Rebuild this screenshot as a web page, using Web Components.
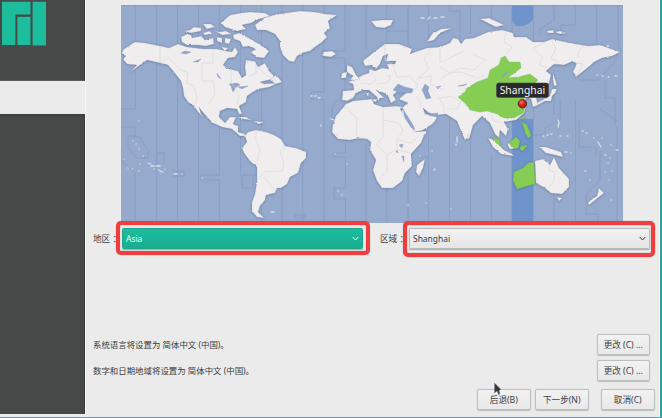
<!DOCTYPE html>
<html lang="zh-CN">
<head>
<meta charset="utf-8">
<title>Installer</title>
<style>
html,body{margin:0;width:662px;height:418px;overflow:hidden;background:#ebebeb;font-family:"Noto Sans","Noto Sans CJK SC",sans-serif;font-size:8.6px;color:#393d3e}
</style>
</head>
<body>
<installer-window></installer-window>
<script>
const define = (name, html) => customElements.define(name, class extends HTMLElement {
  constructor() {
    super();
    const t = document.createElement('template');
    t.innerHTML = html;
    this.attachShadow({mode: 'open'}).append(t.content.cloneNode(true));
  }
});

define('side-panel', `
<style>
:host{display:flex;flex-direction:column;width:85px;height:414px;background:#ebebeb}
.top{height:81px;background:#464947;border-right:1px solid #3a3d3b;border-bottom:1px solid #5b5e5c;box-sizing:border-box}
.current{height:33px;background:#ebebeb}
.rest{flex:1;background:linear-gradient(#3b3d3c,#464947 4px);border-right:1px solid #3a3d3b}
svg{display:block}
</style>
<div class="top"><svg width="50" height="48"><path fill="#1bbd9d" d="M2 1.7H30.5V14.5H15.4V45H2ZM17.4 16.8H30.5V45H17.4ZM32.6 1.7H46V45.5H32.6Z"/></svg></div>
<div class="current"></div><div class="rest"></div>`);

define('zone-map', `
<style>
:host{display:block;width:502px;height:218px}
svg{display:block}
.land{fill:#f0edee;stroke:#a3abbd;stroke-width:.3;stroke-linejoin:round}
.zone{fill:#85ce53;stroke:#78b66a;stroke-width:.35}
.water{fill:#8fa5cc;stroke:#8090b1;stroke-width:.3}
.grid{fill:none;stroke:#8299c1;stroke-width:.65}
.border{fill:none;stroke:#d9d5d6;stroke-width:.6}
.dots{fill:none;stroke:#d8dde8;stroke-width:1.3;stroke-linecap:round}
text{font:10.6px "Noto Sans",sans-serif;fill:#f4f4f4}
</style>
<svg width="502" height="218" viewBox="121 5 502 218">
<defs>
<filter id="coast" x="-5%" y="-5%" width="110%" height="110%" color-interpolation-filters="sRGB"><feTurbulence type="fractalNoise" baseFrequency=".28" numOctaves="2" seed="8" result="n"/><feDisplacementMap in="SourceGraphic" in2="n" scale="2" xChannelSelector="R" yChannelSelector="G" result="d"/><feDropShadow in="d" dx="0" dy=".4" stdDeviation=".8" flood-color="#50658f" flood-opacity=".7"/></filter>
<radialGradient id="pin" cx=".4" cy=".3"><stop stop-color="#ff7266"/><stop offset=".6" stop-color="#e52c22"/><stop offset="1" stop-color="#c91c14"/></radialGradient>
</defs>
<path fill="#96aacd" d="M121 5h502v218H121z"/>
<path fill="#6f93cb" d="M512 5h21v15l-5 4-5 2h-7l-4-6zM512 119h21v104h-21z"/>
<path class="grid" d="M121 5.5H623M135.500 5V109H121M156.500 5V223M177.500 5V223M198.500 5V223M219.500 5V175H201V180H219.500V223M240.500 5V175H262M261.500 5V223M282 5V223M302.700 5V223M324 5V92H311V99H324V223M345 5V51H323V58H345V91L332 107V116M345.500 139V153H333V157H345.500V188H334V199H345.500V223M366 5V50M366 145V223M386.700 5V50M386.700 31H408M386.700 188V223M408 5V45M408 170V223M428.500 5V38M428.500 130V157H419M428.500 157V223M449.500 5V11H460V40M449.500 115V223M470.500 5V34M470.500 137V223M491.500 5V25M491.500 155V223M512 5V223M533.500 5V223M554 5V20L540 29V34M554 70V115M554 165V223M575.500 5V25H561V36M575.500 100V223M596.500 5V42M618 5V45L622 53M619 57L598 80H580M605 80V98H615V125L617 127V223M121 127H135V136H128V147L136 158H148V151L140 137H132M157 163V153H164V164M121 160L135 173V223M172 171H184V176H172M600 109L617 121M579 119V147H596V155M600 150V180L586 195V214H598V223M491 128H511M494 135V128M242 175V188H253V175M295 215H305V218H295V215M533 135H545V128L560 119V100"/>
<g filter="url(#coast)">
<path class="land" d="M123 50L127 47 135 42 145 43 160 46 169 48 178 44 187 47 203 49 217 49 226 51 232 52 235 47 238 52 235 57 228 58 223 65 229 69 238 71 242 78 246 75 245 67 246 60 255 61.500 258 67 265 63 269 71 276 78 268 80 260 82 264 84 277 83 270 87 258 89 253 92 247 96 246 102 239 106 242 114 239 114 237 109 227 108 220 111 219 117 225 123 230 117 236 117 233 124 238 126 238 132 245 134 248 136 240 136 232 129 222 127 213 123 207 117 201 110 199 107 201 114 204 118 198 112 194 106 188 102 184 96 183 88 181 81 174 72 168 65 156 62 147 60 140 65 130 72 137 65 127 64 123 59 126 56 122 54Z"/>
<path class="land" d="M248 132L256 130 266 132 274 135 281 139 285 146 296 148 306 152 306 158 301 163 298 173 290 177 287 184 281 188 277 188 275 193 266 195 265 200 260 206 258 212 264 218 257 217 252 211 252 202 255 194 257 181 257 167 250 161 244 153 242 148 247 142 245 136Z"/>
<path class="land" d="M255 25L264 18 274 15 286 13 300 11 315 12 325 14 337 15 328 21 330 28 324 33 327 37 322 42 315 47 310 51 302 53 297 56 294 62 289 61 283 55 280 48 280 41 275 34 266 30 257 30Z"/>
<path class="land" d="M181 37L187 34 191 35 192 38 201 36 205 40 213 38 214 44 206 46 198 45 187 45 182 42ZM184 31L190 30 194 27 201 28 201 31 191 33ZM203 24H211L215 27 207 29ZM203 33L210 31 212 34 205 35ZM215 31L220 32 226 31 231 34 222 35ZM217 37L222 38 222 43 217 41ZM225 38L231 39 229 44 225 43ZM221 23L230 15 241 13 250 12 265 13 270 16 259 19 251 23 242 25 246 29 237 31 231 29 225 27ZM233 35L239 33 247 37 259 44 269 51 264 58 256 57 251 52 256 49 249 46 243 47 240 41 234 39ZM221 47L228 48 225 51ZM323 52L332 51 336 54 331 57 324 56ZM270 80L276 75 282 82 276 84ZM238 117L246 117 252 120 243 119ZM254 121L264 122 259 124ZM371 21L382 20 393 20 391 25 384 28 376 27Z"/>
<path class="land" d="M342 109L336 116 333 124 332 132 338 139 350 140 359 138 367 139 371 142 370 150 376 160 373 170 377 181 382 188 393 188 402 181 405 173 412 166 411 154 421 143 426 131 415 132 409 124 403 113 400 109 403 107 396 106 383 107 374 104 372 99 353 101 346 104Z"/>
<path class="land" d="M342 100L343 91 354 90 353 84 348 82 356 79 363 75 369 73 370 69 375 71 382 68 389 69 387 64 395 64 396 61 386 61 388 54 383 56 380 64 376 69 372 65 365 66 363 61 374 52 385 44 399 44 412 49 410 54 418 51 427 48 440 47 450 43 453 38 458 39 461 44 465 39 474 38 488 32 502 30 513 33 514 37 526 37 533 42 544 42 552 39 570 43 588 46 600 45 620 52 612 56 602 58 594 62 586 69 576 77 573 71 578 65 573 61 564 65 554 64 546 71 551 75 549 83 541 90 536 97 538 105 533 107 531 99 527 97 524 101 526 107 524 113 516 120 504 122 508 129 506 136 500 130 499 138 495 134 490 123 482 116 473 125 470 136 465 140 461 131 457 121 446 114 438 115 429 113 423 108 425 114 437 117 434 123 423 130 415 132 407 121 402 112 403 107 408 103 399 99 406 93 397 92 393 95 396 100 391 103 387 94 381 92 376 90 384 98 380 98 378 101 377 97 369 90 363 90 356 93 353 98 347 101Z"/>
<path class="land" d="M347 65L352 67 356 75 360 79 350 80 353 76 347 72ZM342 73L347 72 346 78 341 78ZM371 100L377 99 376 102ZM366 93L369 93 368 97ZM425 159L423 168 419 176 416 172 417 165ZM468 134L470 137 467 139ZM427 42L432 34 441 29 452 28 440 33 434 40ZM577 63L583 64 577 76 573 72ZM553 73L557 85 554 86 553 80ZM552 89L557 89 555 93 552 96 551 101 545 101 538 105 537 103 544 99 550 96ZM480 19L489 18 504 25 496 27 488 23ZM547 31L553 30 554 33 548 33ZM555 32L560 31 566 33 560 34Z"/>
<path class="land" d="M488 138L494 140 504 150 512 154 514 156 501 154 493 147ZM507 144L514 141 515 148 510 149ZM539 147L546 147 555 150 561 152 563 157 555 155 546 153ZM535 161L543 159 550 165 554 157 559 168 569 179 569 187 562 194 551 193 545 188 536 183ZM557 197L562 198 559 201ZM599 188L604 193 599 197 594 201 589 205 588 202 597 196Z"/>
<path class="zone" d="M458 97L465 92 467 88 477 82 488 78 490 70 499 65 501 58 505 56 509 62 520 62 521 68 508 78 518 77 530 74 538 80 533 85 520 83 526 90 530 92 524 98 526 106 523 113 514 118 504 118 497 114 487 111 480 112 470 110 467 105Z"/>
<path class="zone" d="M514 172L523 168 528 163 534 162 535 184 527 186 517 189 513 180ZM493 137L499 139 501 146 496 143ZM509 143L516 137 520 141 518 148 513 149ZM522 122L527 125 531 136 528 138 525 132ZM521 146L527 145 523 151 520 150ZM523 115L525 118 522 120Z"/>
</g>
<path class="water" d="M181 53L185 51 191 52 186 54ZM193 62L201 59 198 62ZM217 73L221 79 218 77ZM229 84L237 83 240 85 236 87 233 92 231 86ZM238 87L248 86 242 89ZM393 90L398 84 405 87 413 89 412 93 400 93ZM422 90L425 84 429 87 428 91 431 98 426 99 424 94ZM399 145L403 144 402 148ZM402 156L404 156 404 162ZM397 150L398 153 396 152ZM436 87L441 86 438 89ZM458 86L467 84 463 86ZM403 109L413 125 415 130 411 127 405 118ZM423 108L430 114 438 113 437 116 431 116ZM501 78L507 71 508 73Z"/>
<path class="border" d="M160 46V63L168 57 181 70 188 73 187 83 194 86 197 99 194 106M213 49V63H202V81H213L215 94 208 105M231 69V82L239 94 237 105M249 76L256 73V65L265 74 277 81M256 131V140L260 149 257 162M257 181L264 172 282 171 284 163 280 151 285 147M264 177L272 187 278 190M345 107L357 118 356 138M356 138L366 139M383 107V137L376 145 387 154V171L378 182M387 154L397 150V139L403 131 399 123 383 120M398 150L411 153M398 140L411 143 418 137M372 72L376 79 371 84 360 83M386 76L391 76 387 83 377 84M385 45V60L393 65 397 77M397 77L410 76 418 86 411 93M431 48L424 59 429 69 418 78 432 76 430 84 444 90M440 48V62L450 58 464 51M440 67L450 73 460 68 474 70 485 60 473 54M441 78L451 73 461 72 477 78 485 75M440 98L452 96 461 102 457 109 447 109M416 96L420 102 420 108M438 97L444 106 444 113M506 32L504 42 512 47 506 54M544 43L533 48 542 57 540 65 547 68M552 40L556 49 551 58 558 62M583 46L578 53 578 58M548 161L550 171 555 172 554 180 549 188M491 115L494 121 503 123"/>
<path class="dots" d="M139 121h.1M133 141h.1M136 144h.1M139 149h.1M143 156h.1M124 159h.1M140 164h.1M128 168h.1M132 169h.1M139 171h.1M148 163l3 1M151 166h3M156 166h4M154 169h.1M159 170l3 2M165 169h.1M163 172h.1M174 174h3M182 174h.1M202 178h.1M311 96h1M315 96h1M318 98h2M321 125v1M331 119l3 1M335 154h.1M347 164h.1M338 191h.1M342 195h.1M271 212h3M457 137v5M456 144v1M432 151h.1M434 170l1-1M420 156h.1M408 205h.1M426 203h.1M451 209h.1M421 18h3M428 19l2-2M434 18h3M441 17h3M597 75h.1M602 76h1M608 77h1M615 76h2M558 120l1 3-1 4M543 136h1M547 135h1M551 134h1M560 136h1M567 136h1M582 131h1M586 133h1M594 138h.1M602 138h.1M598 142l3 5M611 145h.1M616 150h2M605 155h1M610 158h.1M608 163h.1M612 171h.1M605 172h.1M609 180h.1M585 171h1M590 180h.1M565 152h2M571 153h.1M611 200h.1M607 46h2"/>
<path fill="#292929" stroke="#494949" stroke-width=".6" d="M498.500 83H546.500Q548.500 83 548.500 85V95.500Q548.500 97.500 546.500 97.500H498.500Q496.500 97.500 496.500 95.500V85Q496.500 83 498.500 83Z"/>
<text x="499.700" y="94" textLength="45.500" lengthAdjust="spacingAndGlyphs">Shanghai</text>
<circle cx="522.400" cy="103.800" r="4.200" fill="url(#pin)" stroke="#4a2922" stroke-width=".9"/>
</svg>`);

define('combo-box', `
<style>
:host{display:flex;align-items:center;justify-content:space-between;box-sizing:border-box;width:241px;height:21px;padding:0 3.5px 0 3px;font-size:8.45px;border:1px solid #b8bcbc;border-radius:1.5px;background:linear-gradient(#f2f2f2,#e5e5e5);box-shadow:0 .5px 1px #aaa}
:host([active]){background:linear-gradient(#1cbc9e,#19ae90);border-color:#23a58c;color:#e2fff6}
svg{fill:none;stroke:currentColor;stroke-width:1}
</style><slot></slot><svg width="7" height="7"><path d="M.7 2L3.500 5 6.300 2"/></svg>`);

define('push-button', `
<style>:host{display:flex;align-items:center;justify-content:center;box-sizing:border-box;width:53.5px;height:21px;border:1px solid #bdbfbf;border-radius:2px;background:linear-gradient(#f2f2f2,#e8e8e8);box-shadow:0 .5px 1px #bbb;white-space:nowrap}</style><slot></slot>`);

define('installer-window', `
<style>
:host{display:grid;position:relative;grid-template-columns:85px 1fr;width:662px;height:418px;box-sizing:border-box;border-right:2px solid #359d9b;border-bottom:1.5px solid #639f9f}
main{display:flex;flex-direction:column;border-left:1px solid #f8f8f8;border-right:1px solid #f5f5f5;padding:5px 0 0 7px;box-sizing:border-box}
zone-map{margin-left:28px;flex:none}
.selectors{display:grid;grid-template-columns:29px 241px 17px 29px 241px;align-items:center;height:21px;margin-top:5px}
.selectors span{white-space:pre}
.locale{display:flex;flex-direction:column;gap:5px;margin-top:84.5px}
.row{display:flex;justify-content:space-between;align-items:center;width:557px;height:21px}
.row span{font-size:8.43px;padding-bottom:1px}
.actions{display:flex;margin:8.5px 0 0 384px;gap:4.5px}
.actions :last-child{margin-left:8px}
.frame{position:absolute;box-sizing:border-box;border:4.5px solid #f23d3e;border-radius:5px;top:221px;box-shadow:0 0 1px #767676,inset 0 0 1px #767676}
.region{left:116px;width:254px;height:33.500px}.zone{left:403px;width:252px;height:35.500px}
.cursor{position:absolute;left:493px;top:382px}
</style>
<side-panel></side-panel>
<main><zone-map></zone-map>
<div class="selectors"><span>地区 ：</span><combo-box active>Asia</combo-box><i></i><span>区域 ：</span><combo-box>Shanghai</combo-box></div>
<div class="locale"><div class="row"><span>系统语言将设置为 简体中文 (中国)。</span><push-button>更改 (C) ...</push-button></div><div class="row"><span>数字和日期地域将设置为 简体中文 (中国)。</span><push-button>更改 (C) ...</push-button></div></div>
<div class="actions"><push-button>后退(B)</push-button><push-button>下一步(N)</push-button><push-button>取消(C)</push-button></div>
</main>
<div class="frame region"></div><div class="frame zone"></div>
<svg class="cursor" width="9" height="14"><path d="M1.500 1V11L4 9 5.500 12.500 7 12 6 8.500 8 7.500Z" fill="#363838" stroke="#858585" stroke-width=".5"/></svg>`);
</script>
</body>
</html>
